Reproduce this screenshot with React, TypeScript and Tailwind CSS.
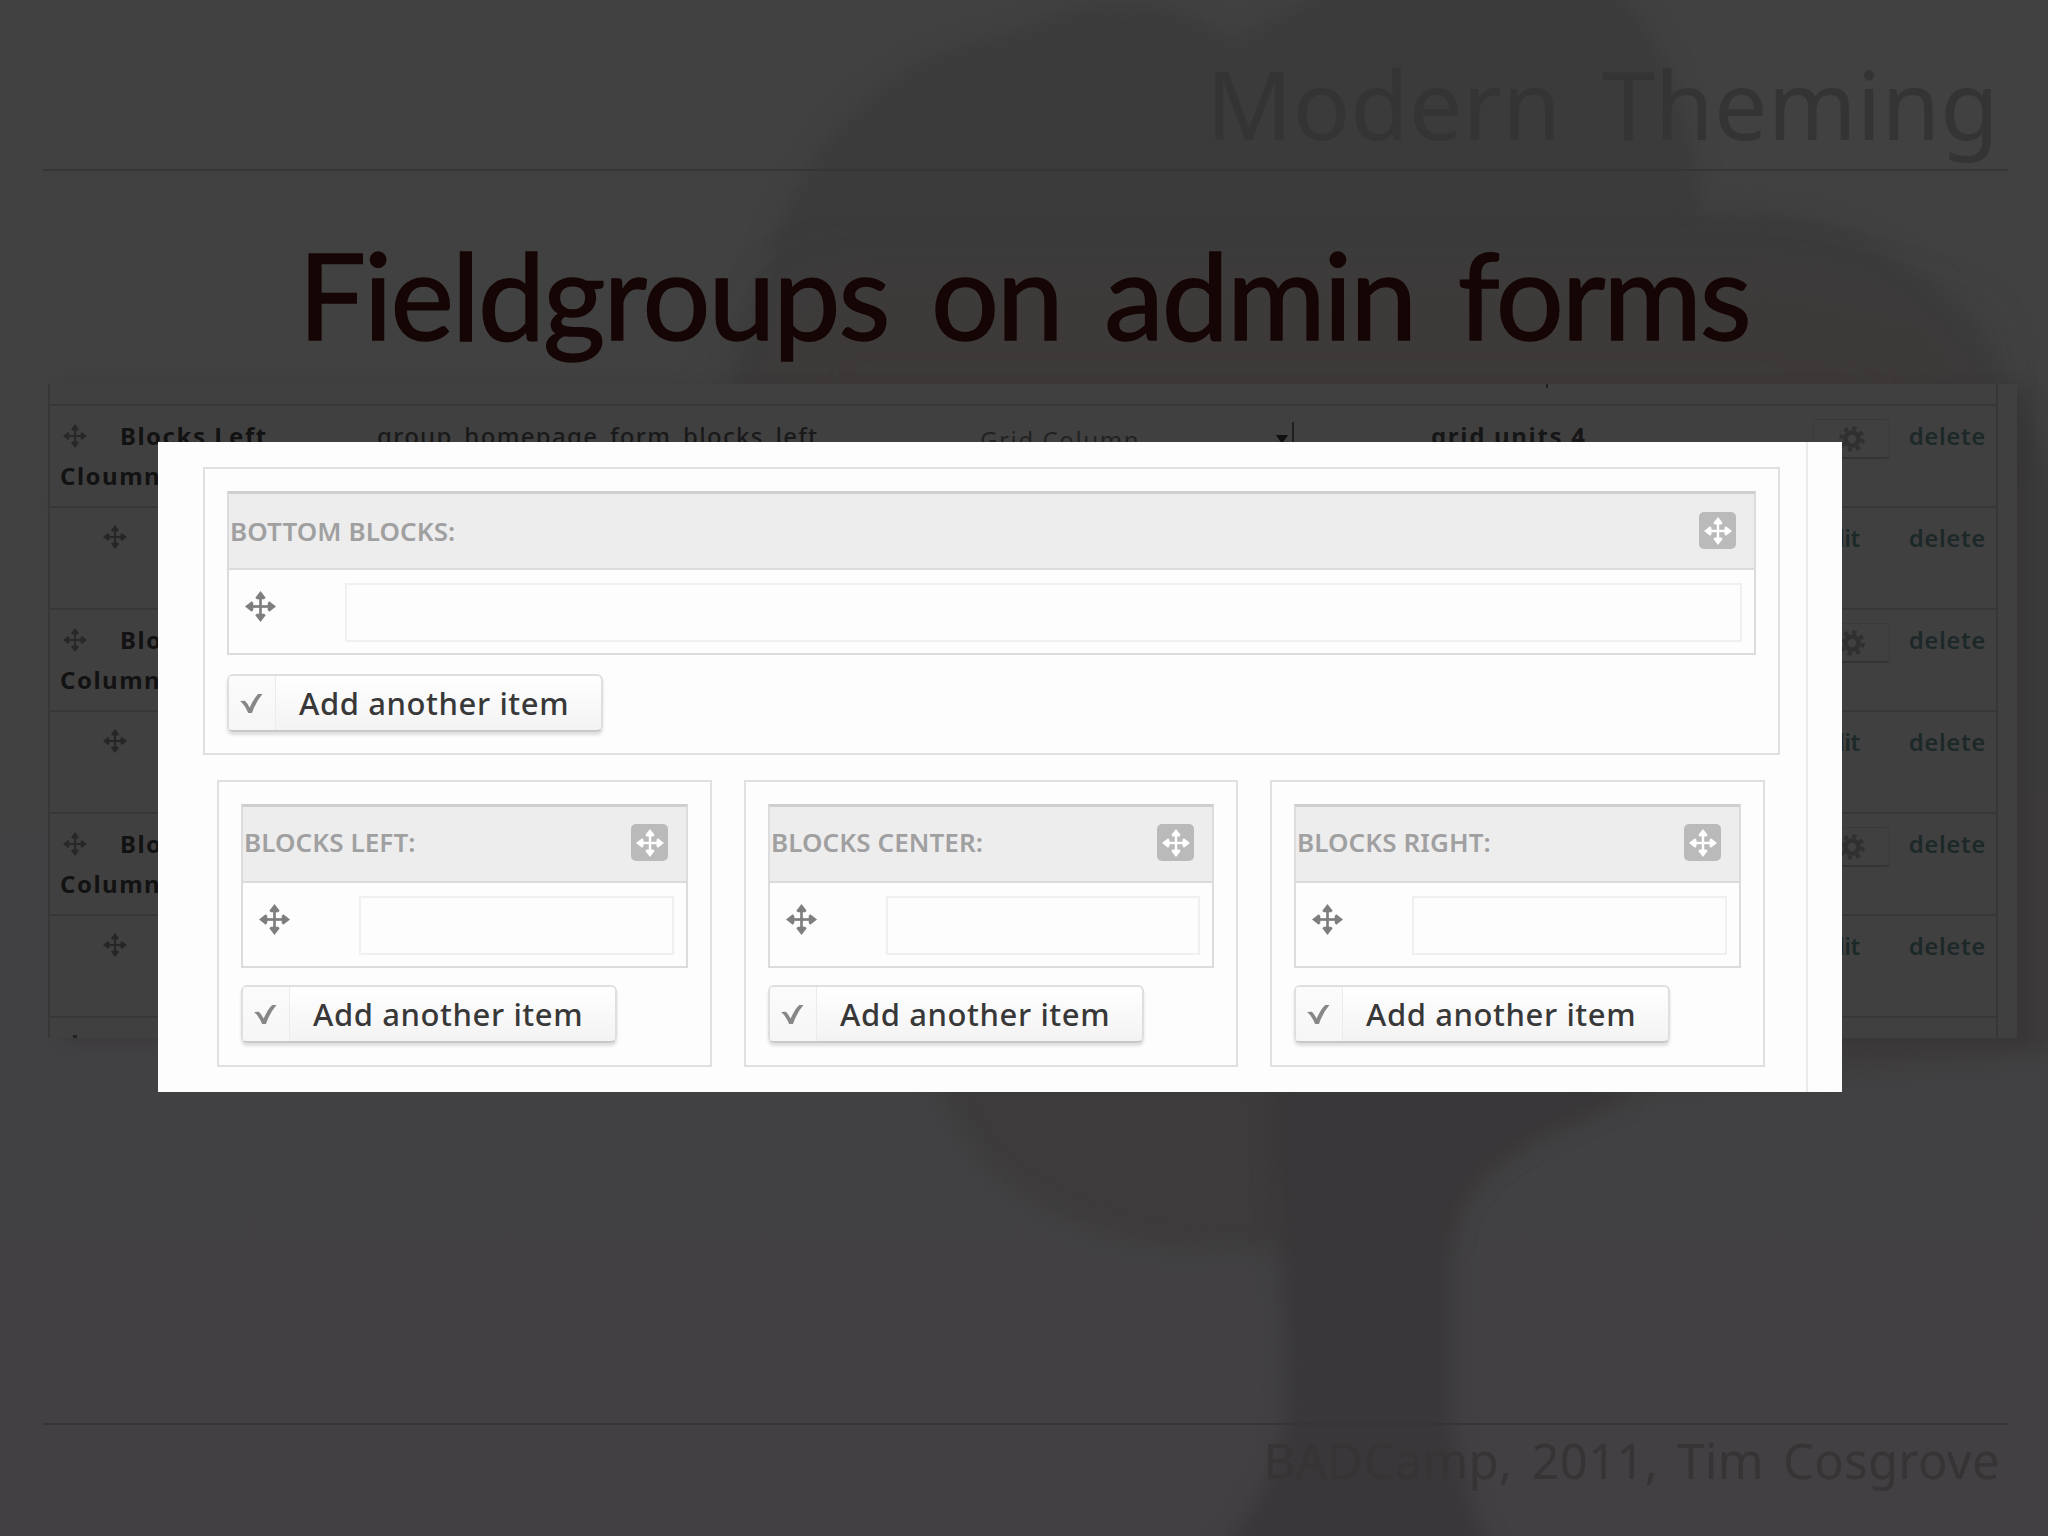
import clsx from 'clsx'

interface RowData {
  title?: string
  subtitle?: string
  machineName?: string
  widget?: string
  summary?: string
}

interface BlockFieldProps {
  label: string
  wide?: boolean
  className?: string
}

const rows: RowData[] = [
  {
    title: 'Blocks Left',
    subtitle: 'Cloumn',
    machineName: 'group_homepage_form_blocks_left',
    widget: 'Grid Column',
    summary: 'grid units 4',
  },
  {},
  { title: 'Blocks', subtitle: 'Column' },
  {},
  { title: 'Blocks', subtitle: 'Column' },
  {},
]

function MoveIcon({ className }: { className?: string }) {
  return (
    <svg viewBox="0 0 30 30" className={clsx('shrink-0', className)} fill="currentColor">
      <path d="M13.700 5h2.600v20h-2.600z" />
      <path d="M5 13.700h20v2.600H5z" />
      <path d="M15 0l5 6.500-1.500 1.500h-7L10 6.500zM15 30l5-6.500-1.500-1.500h-7L10 23.500zM0 15l6.500-5 1.500 1.500v7L6.500 20zM30 15l-6.500-5-1.500 1.500v7l1.500 1.500z" />
    </svg>
  )
}

function GearIcon() {
  return (
    <svg viewBox="0 0 30 30" className="h-7 w-7" fill="none" stroke="currentColor">
      <circle cx="15" cy="15" r="7" strokeWidth="5" />
      <circle cx="15" cy="15" r="11.5" strokeWidth="4.5" strokeDasharray="4.5 4.53" />
    </svg>
  )
}

function TreeBackdrop() {
  return (
    <svg viewBox="0 0 1568 1176" className="absolute inset-0 h-full w-full" colorInterpolationFilters="sRGB">
      <defs>
        <filter id="soft" x="-10%" y="-10%" width="120%" height="120%">
          <feGaussianBlur stdDeviation="8" />
        </filter>
        <filter id="glow" x="-20%" y="-60%" width="140%" height="220%">
          <feGaussianBlur stdDeviation="26" />
        </filter>
        <linearGradient id="crown" x1="0" y1="0" x2="0" y2="1">
          <stop offset="0" stopColor="#3b3b3b" />
          <stop offset="1" stopColor="#3d3b3b" />
        </linearGradient>
      </defs>
      <path
        filter="url(#soft)"
        fill="url(#crown)"
        d="M780 25C830 -5 900 -5 945 32C980 10 1010 -5 1050 -20H1230C1275 30 1300 90 1303 165C1370 155 1440 175 1495 230C1530 260 1550 320 1590 400V800C1480 825 1330 815 1240 842C1170 870 1115 895 1111 950L980 955C880 965 790 930 750 885C725 850 715 820 700 780L560 290C570 220 595 180 612 140C645 80 700 35 780 25Z"
      />
      <path
        filter="url(#soft)"
        fill="#393739"
        d="M972 780H1250L1240 842C1170 870 1115 895 1111 950V1080C1115 1120 1125 1150 1145 1200H925C965 1150 985 1120 985 1060Z"
      />
      <path filter="url(#glow)" fill="#403838" fillOpacity="0.55" d="M620 225H1370L1500 260V340H560Z" />
    </svg>
  )
}

function TableRow({ row }: { row: RowData }) {
  return (
    <div className="flex h-[102px] border-t-2 border-[#383738] text-[24px] leading-[40px]">
      {row.title ? (
        <>
          <div className="w-[316px] shrink-0 pt-[10px] pl-2.5 font-bold tracking-[1.5px] text-[#121212]">
            <div className="flex items-center">
              <MoveIcon className="mr-[33px] ml-[3px] h-6 w-6 text-[#282828]" />
              <span className="whitespace-nowrap">{row.title}</span>
            </div>
            <div>{row.subtitle}</div>
          </div>
          <div className="w-[590px] shrink-0 pt-[10px] pl-[11px] font-medium tracking-[1.3px] text-[#191919]">{row.machineName}</div>
          <div className="w-[464px] shrink-0 pt-[14px]">
            {row.widget && (
              <div className="flex h-10 items-center gap-[136px] pl-[24px] tracking-[1.6px] whitespace-nowrap text-[#222]">
                <span>{row.widget}</span>
                <span className="flex items-center text-[#111]">
                  <svg viewBox="0 0 12 10" className="h-2.5 w-3" fill="currentColor">
                    <path d="M0 0h12L6 9z" />
                  </svg>
                  <span className="-mt-3 ml-1 h-6 w-0.5 bg-[#202020]" />
                </span>
              </div>
            )}
          </div>
          <div className="w-[393px] shrink-0 pt-[10px] pl-[11px] font-bold tracking-[1.7px] text-[#161616]">{row.summary}</div>
          <div className="pt-[13px]">
            <div className="flex h-10 w-[77px] items-center justify-center rounded-[3px] border border-b-2 border-[#3b3a3b] border-b-[#353435] text-[#303030]">
              <GearIcon />
            </div>
          </div>
        </>
      ) : (
        <>
          <MoveIcon className="mt-[17px] ml-[53px] h-6 w-6 text-[#262626]" />
          <div className="ml-auto pt-[10px] pr-[49px] font-semibold tracking-[-0.5px] text-[#1d2928]">edit</div>
        </>
      )}
      <div className={clsx('pt-[10px] pr-[10px] font-semibold tracking-[0.6px] text-[#1d2928]', row.title && 'ml-auto')}>delete</div>
    </div>
  )
}

function AddButton({ className }: { className?: string }) {
  return (
    <button
      className={clsx(
        'flex h-[58px] w-[376px] items-stretch rounded-[6px] border-2 border-[#e0dfe0] border-b-[#c9c8c9] bg-linear-to-b from-white to-[#f4f3f4] shadow-[0_3px_3px_rgba(0,0,0,0.12)]',
        className
      )}
    >
      <span className="flex w-[47px] items-center border-r border-[#ececec] bg-[#f8f8f8]/60 pl-[11px]">
        <svg viewBox="0 0 24 22" className="h-[21px] w-[23px]" fill="#878787">
          <path d="M0 8.500L5 8Q8 10.500 10 15.500Q14 6 19 1H23.500Q16.500 9 12.500 21H8.500Q5 12.500 0 8.500Z" />
        </svg>
      </span>
      <span className="flex items-center pl-[23px] text-[31px] leading-none font-medium tracking-[0.6px] whitespace-nowrap text-[#383838]">
        Add another item
      </span>
    </button>
  )
}

function BlockField({ label, wide, className }: BlockFieldProps) {
  return (
    <div className={clsx('border-2 border-[#e0dfe1] px-[22px] pt-[22px]', className)}>
      <div className="flex h-[164px] flex-col border-2 border-[#dcdbdd] border-t-[3px] border-t-[#cfced0]">
        <div
          className={clsx(
            'flex h-[76px] items-center justify-between border-b-2 border-[#dbdadc] bg-[#eeedee] pr-[18px] pl-px',
            wide ? 'pb-px' : 'pb-[3px]'
          )}
        >
          <span className={clsx('text-[26px] leading-none font-semibold tracking-[0.1px] text-[#a0a0a1]', !wide && '-mt-0.5')}>
            {label}
          </span>
          <span className="flex h-[37px] w-[37px] items-center justify-center rounded-[5px] bg-[#bababb] text-white">
            <MoveIcon className="h-7 w-7" />
          </span>
        </div>
        <div className="flex grow pt-[13px] pr-[12px] pl-[16px]">
          <MoveIcon className="mt-[8px] h-[31px] w-[31px] text-[#7e7e7e]" />
          <div className="ml-[69px] h-[59px] grow border-2 border-[#f1eff1]" />
        </div>
      </div>
      <AddButton className={wide ? 'mt-[19px]' : 'mt-[17px]'} />
    </div>
  )
}

export default function App() {
  return (
    <div className="relative flex h-[1536px] w-[2048px] flex-col overflow-hidden bg-linear-to-b from-[#414141] to-[#424043] font-['Noto_Sans',sans-serif]">
      <TreeBackdrop />

      {/* Slide header */}
      <header className="relative mr-[40px] ml-[43px] flex h-[171px] items-end justify-end border-b-2 border-[#353535] pr-[9px]">
        <span className="mb-[10px] text-[95px] leading-[112px] tracking-[0.2px] whitespace-nowrap text-[#343434] [word-spacing:16px]">
          Modern Theming
        </span>
      </header>

      <h1 className="relative flex h-[213px] items-start justify-center pt-[53px] font-['Lato',sans-serif] text-[120px] leading-[140px] tracking-[-2.1px] whitespace-nowrap text-[#150504] [-webkit-text-stroke:1.5px_#150504] [word-spacing:14px]">
        Fieldgroups on admin forms
      </h1>

      {/* Field list behind the dialog */}
      <div className="relative mr-[31px] ml-[48px] h-[654px] overflow-hidden bg-[#414041] shadow-[14px_4px_14px_rgba(45,38,42,0.25)]">
        <div className="mr-[19px] h-full border-x-2 border-[#383738]">
          <div className="flex h-5 justify-end pr-[448px]">
            <span className="h-1 w-0.5 bg-[#222]" />
          </div>
          {rows.map((row, i) => (
            <TableRow key={i} row={row} />
          ))}
          <div className="h-5 border-t-2 border-[#383738] pt-[17px] pl-[23px]">
            <div className="h-1 w-1 bg-[#222]" />
          </div>
        </div>
      </div>

      {/* Slide footer */}
      <footer className="relative mr-[40px] ml-[43px] mt-auto flex h-[113px] justify-end border-t-2 border-[#363437] pr-[8px]">
        <span className="mt-[5px] text-[49px] leading-[60px] tracking-[0.3px] whitespace-nowrap text-[#363435] [word-spacing:6px]">
          BADCamp, 2011, Tim Cosgrove
        </span>
      </footer>

      {/* Dialog */}
      <div className="absolute top-[442px] left-[158px] flex h-[650px] w-[1684px] bg-[#fefdfe]">
        <div className="w-[1650px] border-r-2 border-[#ebe9eb] pt-[25px] pl-[45px]">
          <BlockField wide label="BOTTOM BLOCKS:" className="h-[288px] w-[1577px]" />
          <div className="mt-[25px] ml-[14px] flex gap-8">
            <BlockField label="BLOCKS LEFT:" className="h-[287px] w-[495px]" />
            <BlockField label="BLOCKS CENTER:" className="h-[287px] w-[494px]" />
            <BlockField label="BLOCKS RIGHT:" className="h-[287px] w-[495px]" />
          </div>
        </div>
      </div>
    </div>
  )
}
